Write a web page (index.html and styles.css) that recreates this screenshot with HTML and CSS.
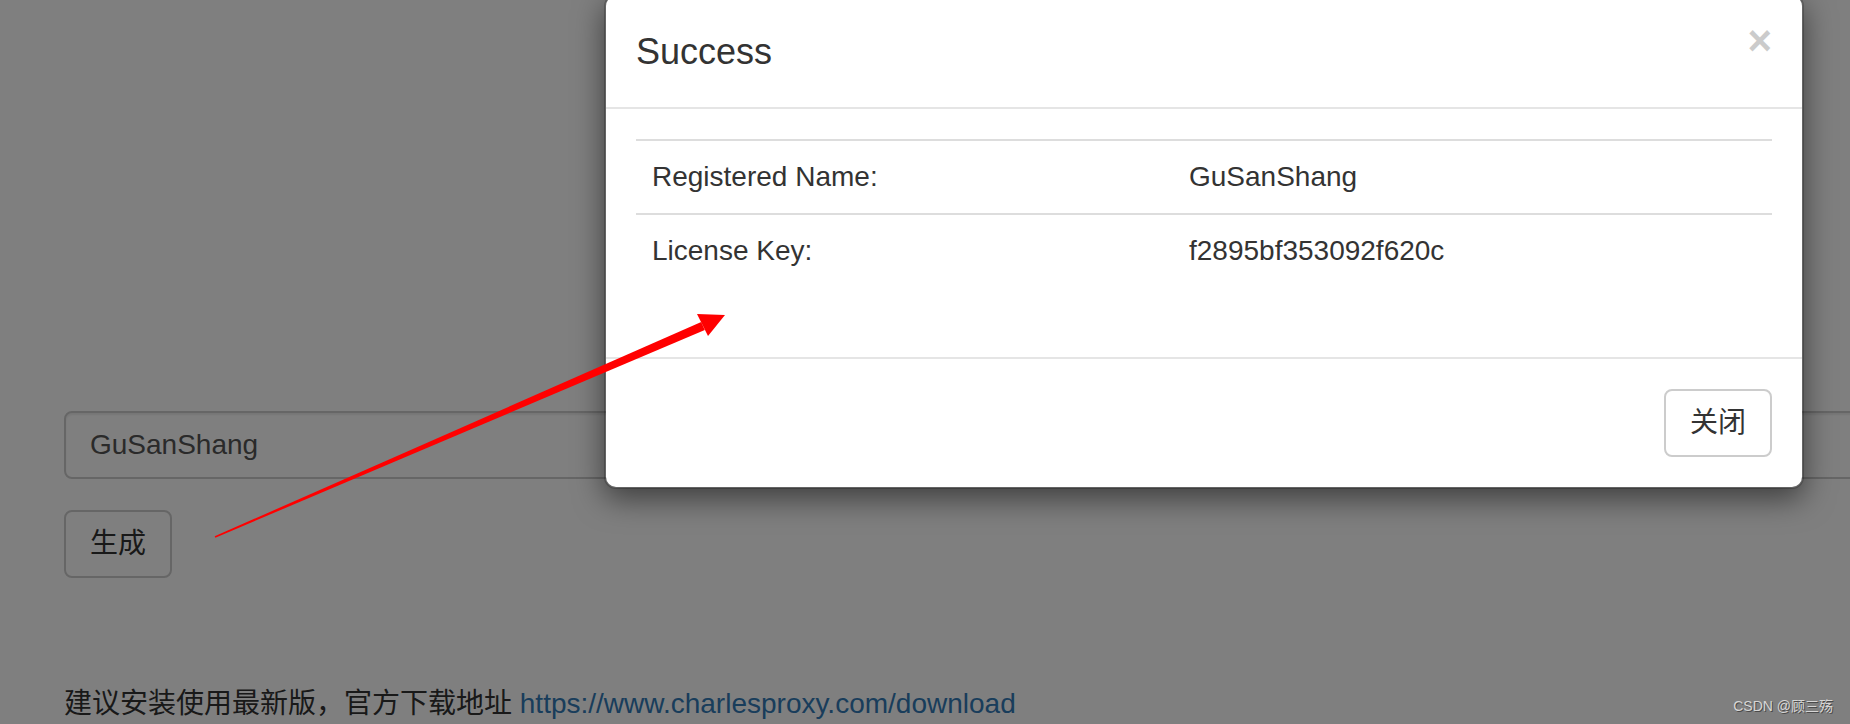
FILE: index.html
```html
<!DOCTYPE html>
<html lang="zh-CN">
<head>
<meta charset="utf-8">
<title>Charles License</title>
<link rel="stylesheet" href="styles.css">
</head>
<body>
<main class="page">
  <input class="form-control" type="text" value="GuSanShang">
  <button class="btn btn-generate" type="button">生成</button>
  <p class="hint">建议安装使用最新版，官方下载地址 <a class="link" href="#">https://www.charlesproxy.com/download</a></p>
</main>

<div class="backdrop"></div>

<div class="modal">
  <div class="modal-header">
    <span class="close">×</span>
    <h4 class="modal-title">Success</h4>
  </div>
  <div class="modal-body">
    <table class="table">
      <tbody>
        <tr><td class="col-label">Registered Name:</td><td>GuSanShang</td></tr>
        <tr><td class="col-label">License Key:</td><td>f2895bf353092f620c</td></tr>
      </tbody>
    </table>
  </div>
  <div class="modal-footer">
    <button class="btn" type="button">关闭</button>
  </div>
</div>

<svg class="annotation" width="1850" height="724" viewBox="0 0 1850 724">
  <polygon fill="#ff0000" points="215.3,537.7 214.7,536.3 701.2,321.9 704.8,330.1"/>
  <polygon fill="#ff0000" points="725,315 697,314 708,336"/>
</svg>

<div class="watermark">CSDN @顾三殇</div>
</body>
</html>
```

FILE: styles.css
```css
html, body {
  margin: 0;
  padding: 0;
}

body {
  width: 1850px;
  height: 724px;
  overflow: hidden;
  position: relative;
  background: #ffffff;
  color: #333333;
  font-family: "Liberation Sans", Arial, "Noto Sans CJK SC", sans-serif;
  font-size: 28px;
  line-height: 40px;
}

.page {
  padding: 411px 0 0 64px;
  display: flex;
  flex-direction: column;
  align-items: flex-start;
}

.form-control {
  box-sizing: border-box;
  width: 1840px;
  height: 68px;
  margin: 0;
  padding: 12px 24px;
  border: 2px solid #cccccc;
  border-radius: 8px;
  background: #ffffff;
  color: #555555;
  font-family: inherit;
  font-size: 28px;
  line-height: 40px;
  box-shadow: inset 0 2px 2px rgba(0, 0, 0, 0.075);
  outline: none;
}

.btn {
  box-sizing: border-box;
  height: 68px;
  margin: 0;
  padding: 12px 24px;
  border: 2px solid #cccccc;
  border-radius: 8px;
  background: #ffffff;
  color: #333333;
  font-family: inherit;
  font-size: 28px;
  line-height: 40px;
}

.btn-generate {
  margin-top: 31px;
}

.hint {
  margin: 106px 0 0 0;
  font-size: 28px;
  line-height: 40px;
  white-space: nowrap;
}

.link {
  color: #337ab7;
  text-decoration: none;
}

.backdrop {
  position: absolute;
  inset: 0;
  background: rgba(0, 0, 0, 0.5);
}

.modal {
  position: absolute;
  top: -6px;
  left: 604px;
  width: 1200px;
  box-sizing: border-box;
  background: #ffffff;
  border: 2px solid rgba(0, 0, 0, 0.2);
  border-radius: 12px;
  box-shadow: 0 10px 30px rgba(0, 0, 0, 0.5);
  background-clip: padding-box;
}

.modal-header {
  padding: 30px;
  border-bottom: 2px solid #e5e5e5;
}

.modal-title {
  margin: 0;
  font-size: 36px;
  font-weight: 500;
  line-height: 51.4px;
  color: #333333;
}

.close {
  float: right;
  margin-top: -6px;
  font-size: 42px;
  font-weight: bold;
  line-height: 1;
  color: #000000;
  opacity: 0.2;
}

.modal-body {
  padding: 30px;
}

.table {
  width: 100%;
  border-collapse: collapse;
  border-spacing: 0;
  margin-bottom: 40px;
}

.table td {
  padding: 16px;
  line-height: 40px;
  border-top: 2px solid #dddddd;
  vertical-align: top;
  text-align: left;
}

.col-label {
  width: 505px;
}

.modal-footer {
  padding: 30px;
  border-top: 2px solid #e5e5e5;
  display: flex;
  justify-content: flex-end;
}

.annotation {
  position: absolute;
  left: 0;
  top: 0;
  pointer-events: none;
}

.watermark {
  position: absolute;
  right: 17px;
  bottom: 9px;
  font-size: 14px;
  line-height: 18px;
  color: #d6d6d6;
  text-shadow: 1px 1px 0 #4a4a4a;
}
```
